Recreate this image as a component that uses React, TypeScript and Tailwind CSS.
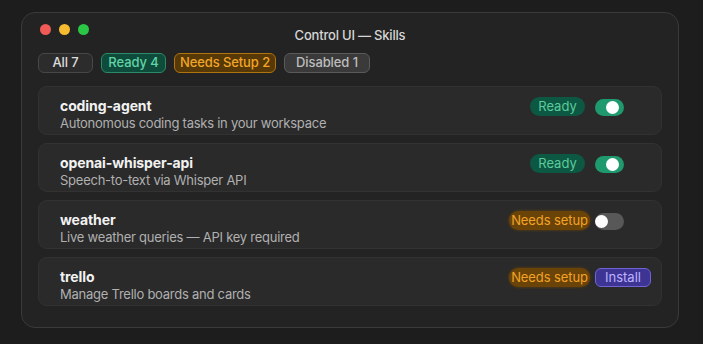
import React from 'react';

type Skill = {
  name: string;
  desc: string;
  status: 'ready' | 'setup';
  control: 'on' | 'off' | 'install';
};

const SKILLS: Skill[] = [
  { name: 'coding-agent', desc: 'Autonomous coding tasks in your workspace', status: 'ready', control: 'on' },
  { name: 'openai-whisper-api', desc: 'Speech-to-text via Whisper API', status: 'ready', control: 'on' },
  { name: 'weather', desc: 'Live weather queries — API key required', status: 'setup', control: 'off' },
  { name: 'trello', desc: 'Manage Trello boards and cards', status: 'setup', control: 'install' },
];

function Toggle({ on }: { on: boolean }) {
  return (
    <div
      className={`relative mt-[2px] h-[17px] w-[29px] rounded-full ${on ? 'bg-[#1f9a6e]' : 'bg-[#585858]'}`}
    >
      <span
        className={`absolute top-[2px] h-[13px] w-[13px] rounded-full bg-white ${on ? 'left-[11px]' : 'left-0'}`}
      />
    </div>
  );
}

function SkillRow({ skill }: { skill: Skill }) {
  return (
    <div className="flex h-[49px] items-start justify-between rounded-[9px] border border-[#323232] bg-[#2a2a2a] pl-[21px] pr-[10px] pt-[10px]">
      <div>
        <div className="text-[14px] font-bold leading-[18px] tracking-[-0.1px] text-[#f2f2f2]">{skill.name}</div>
        <div className="text-[13px] leading-[16px] tracking-[-0.25px] text-[#b0b0b0]">{skill.desc}</div>
      </div>
      <div className="flex items-start">
        {skill.status === 'ready' ? (
          <span className="mr-[10px] flex h-[19px] w-[55px] items-center justify-center rounded-full bg-[#0d5843] text-[13px] text-[#5ccb9c]">
            Ready
          </span>
        ) : (
          <span className="mr-[5px] flex h-[19px] w-[81px] items-center justify-center rounded-full bg-[#6a4308] text-[13px] tracking-[-0.1px] text-[#f3a326] shadow-[0_0_3px_#6a4308]">
            Needs setup
          </span>
        )}
        <div className="w-[56px]">
          {skill.control === 'install' ? (
            <button className="flex h-[19px] w-[56px] items-center justify-center rounded-[6px] border border-[#6f63d6] bg-[#3d3494] text-[13px] text-[#bdb3ff]">
              Install
            </button>
          ) : (
            <Toggle on={skill.control === 'on'} />
          )}
        </div>
      </div>
    </div>
  );
}

export default function App() {
  return (
    <div
      className="h-[344px] w-[703px] bg-[#1d1d1d] pl-[21px] pt-[12px]"
      style={{ fontFamily: 'Inter, "Noto Sans", sans-serif' }}
    >
      <div className="h-[316px] w-[658px] rounded-[14px] border border-[#3a3a3a] bg-[#232323] px-4">
        {/* title bar */}
        <div className="grid h-[40px] grid-cols-[1fr_auto_1fr]">
          <div className="ml-[2px] flex gap-2 pt-[11px]">
            <span className="h-[11px] w-[11px] rounded-full bg-[#f05a57]" />
            <span className="h-[11px] w-[11px] rounded-full bg-[#f6bb2f]" />
            <span className="h-[11px] w-[11px] rounded-full bg-[#2bc645]" />
          </div>
          <div className="pt-[14px] text-[13px] font-medium leading-[16px] tracking-[-0.2px] text-[#d6d6d6]">
            Control UI — Skills
          </div>
          <div />
        </div>

        {/* filters */}
        <div className="flex gap-2 text-[13px] font-medium tracking-[-0.1px]">
          <span className="flex h-[20px] w-[55px] items-center justify-center rounded-[6px] border border-[#474747] bg-[#2c2c2c] text-[#dcdcdc]">
            All 7
          </span>
          <span className="flex h-[20px] w-[65px] items-center justify-center rounded-[6px] border border-[#2b8a68] bg-[#0e4b3b] text-[#62d3a6]">
            Ready 4
          </span>
          <span className="flex h-[20px] w-[102px] items-center justify-center rounded-[6px] border border-[#b0740f] bg-[#573807] text-[#f1a62a]">
            Needs Setup 2
          </span>
          <span className="flex h-[20px] w-[86px] items-center justify-center rounded-[6px] border border-[#5a5a5a] bg-[#3a3a3a] text-[#bdbdbd]">
            Disabled 1
          </span>
        </div>

        {/* skills */}
        <div className="mt-[13px] flex flex-col gap-2">
          {SKILLS.map((s) => (
            <SkillRow key={s.name} skill={s} />
          ))}
        </div>
      </div>
    </div>
  );
}
